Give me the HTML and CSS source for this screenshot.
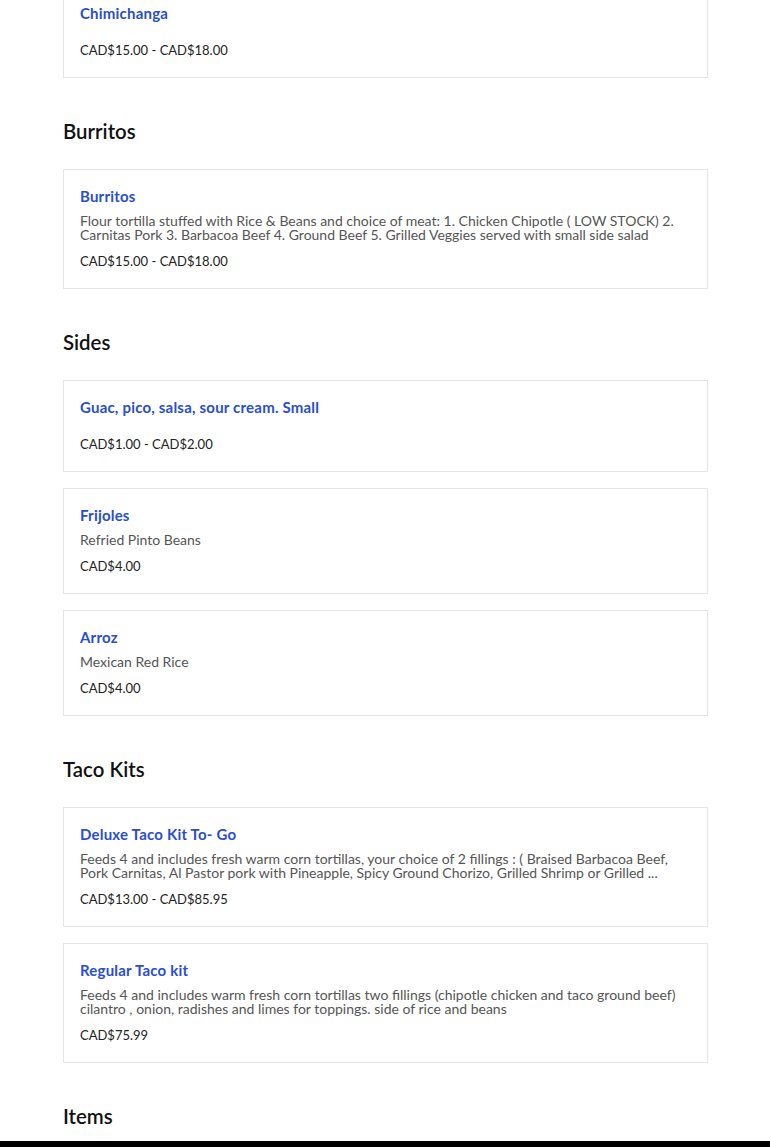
FILE: index.html
```html
<!DOCTYPE html>
<html lang="en">
<head>
<meta charset="utf-8">
<title>Menu</title>
<link rel="stylesheet" href="styles.css">
</head>
<body>
<main class="menu">
  <section class="category first">
    <div class="items">
      <article class="card">
        <h3 class="card-title">Chimichanga</h3>
        <p class="card-desc"></p>
        <p class="card-price">CAD$15.00 - CAD$18.00</p>
      </article>
    </div>
  </section>

  <section class="category">
    <h2 class="cat-title">Burritos</h2>
    <div class="items">
      <article class="card">
        <h3 class="card-title">Burritos</h3>
        <p class="card-desc">Flour tortilla stuffed with Rice &amp; Beans and choice of meat: 1. Chicken Chipotle ( LOW STOCK) 2. Carnitas Pork 3. Barbacoa Beef 4. Ground Beef 5. Grilled Veggies served with small side salad</p>
        <p class="card-price">CAD$15.00 - CAD$18.00</p>
      </article>
    </div>
  </section>

  <section class="category">
    <h2 class="cat-title">Sides</h2>
    <div class="items">
      <article class="card">
        <h3 class="card-title">Guac, pico, salsa, sour cream. Small</h3>
        <p class="card-desc"></p>
        <p class="card-price">CAD$1.00 - CAD$2.00</p>
      </article>
      <article class="card">
        <h3 class="card-title">Frijoles</h3>
        <p class="card-desc">Refried Pinto Beans</p>
        <p class="card-price">CAD$4.00</p>
      </article>
      <article class="card">
        <h3 class="card-title">Arroz</h3>
        <p class="card-desc">Mexican Red Rice</p>
        <p class="card-price">CAD$4.00</p>
      </article>
    </div>
  </section>

  <section class="category">
    <h2 class="cat-title">Taco Kits</h2>
    <div class="items">
      <article class="card">
        <h3 class="card-title">Deluxe Taco Kit To- Go</h3>
        <p class="card-desc">Feeds 4 and includes fresh warm corn tortillas, your choice of 2 fillings : ( Braised Barbacoa Beef, Pork Carnitas, Al Pastor pork with Pineapple, Spicy Ground Chorizo, Grilled Shrimp or Grilled ...</p>
        <p class="card-price">CAD$13.00 - CAD$85.95</p>
      </article>
      <article class="card">
        <h3 class="card-title">Regular Taco kit</h3>
        <p class="card-desc">Feeds 4 and includes warm fresh corn tortillas two fillings (chipotle chicken and taco ground beef) cilantro , onion, radishes and limes for toppings. side of rice and beans</p>
        <p class="card-price">CAD$75.99</p>
      </article>
    </div>
  </section>

  <section class="category">
    <h2 class="cat-title">Items</h2>
  </section>
</main>
<footer class="footer"></footer>
</body>
</html>
```

FILE: styles.css
```css
* { box-sizing: border-box; }

html, body {
  margin: 0;
  padding: 0;
  background: #fff;
}

body {
  font-family: Lato, "Noto Sans", "Liberation Sans", sans-serif;
  color: #222;
  overflow: hidden;
}

.menu {
  width: 645px;
  margin: -14px 0 0 63px;
  display: flex;
  flex-direction: column;
}

.category {
  display: flex;
  flex-direction: column;
  margin-top: 41px;
}

.category.first {
  margin-top: 0;
}

.cat-title {
  margin: 0 0 26px 0;
  font-size: 20.4px;
  line-height: 24px;
  font-weight: 600;
  color: #111;
}

.items {
  display: flex;
  flex-direction: column;
  gap: 16px;
}

.card {
  border: 1px solid #e5e5e5;
  padding: 16px 16px 17px 16px;
  display: flex;
  flex-direction: column;
}

.card-title {
  margin: 0;
  font-size: 15px;
  line-height: 20px;
  font-weight: 700;
  letter-spacing: 0.2px;
  color: #2a4ecb;
}

.card-desc {
  margin: 8px 0 9px 0;
  font-size: 14px;
  line-height: 14px;
  color: #555;
}

.card-price {
  margin: 0;
  font-size: 13px;
  line-height: 20px;
  color: #222;
}

.footer {
  position: fixed;
  left: 0;
  right: 0;
  top: 1141px;
  height: 20px;
  background: #000;
}
```
